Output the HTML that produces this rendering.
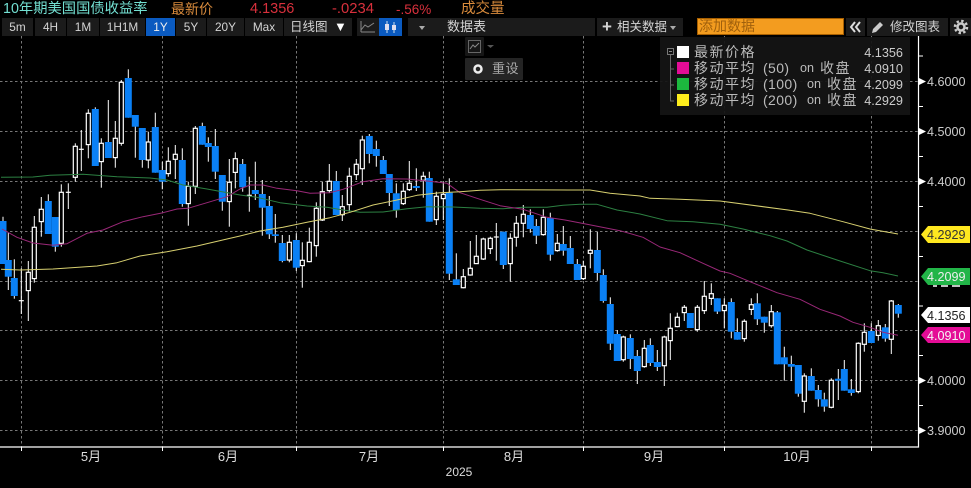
<!DOCTYPE html>
<html><head><meta charset="utf-8">
<style>
html,body{margin:0;padding:0;background:#000;width:971px;height:488px;overflow:hidden}
body{position:relative;font-family:"Liberation Sans","Noto Sans CJK SC",sans-serif;color:#ccc}
.a{position:absolute;white-space:nowrap}
.h{top:1px;font-size:14.3px;line-height:17px}
.b{position:absolute;top:18px;height:18px;background:#1b1b1b;font-size:11.8px;line-height:18px;text-align:center;color:#d4d4d4}
.c{font-size:13px}
.r{position:absolute;font-size:14px;line-height:16px;letter-spacing:1.5px;color:#bbb;white-space:nowrap}
.p{letter-spacing:.4px}
.o{font-size:12.6px;letter-spacing:0}
.v{position:absolute;right:68px;font-size:12.7px;line-height:16px;color:#ccc}
.s{position:absolute;left:677px;width:12px;height:12px}
svg{position:absolute;left:0;top:0}
</style></head><body>
<svg id="c" width="971" height="488" viewBox="0 0 971 488" font-family="Liberation Sans,Noto Sans CJK SC,sans-serif">
<g stroke="#777" stroke-width="1" stroke-dasharray="2.5 2.5" fill="none">
<path d="M21.5 36V447M162.5 36V447M296.5 36V447M443.5 36V447M583.5 36V447M724.5 36V447M871.5 36V447"/>
<path d="M0 81.5H918M0 131.5H918M0 181.5H918M0 231.5H918M0 281.5H918M0 330.5H918M0 380.5H918M0 430.5H918"/>
</g>
<g id="candles"></g>
<g fill="none" stroke-width="1" stroke-linejoin="round">
<path id="g" stroke="#2c8042" d="M1 177.3L33 177 50 175.3 83 174.3 117 176.7 150 178 167 180 183 185 207 189 240 195 257 197.3 280 202.7 307 206 327 207.3 343 210 360 212.3 383 212 407 208.7 427 206.7 453 207 480 208.3 503 208.7 523 207.3 547 207.3 563 205.3 580 204.3 597 204.3 617 210 640 214 667 220.7 693 221.7 720 224.3 743 229 770 235.7 787 241 807 250 837 260 870 270.7 883 272.7 898 276"/>
<path id="m" stroke="#9a2878" d="M2 229L17 237.3 33 243 53 245.3 67 243.7 87 233.3 103 230 123 221.7 143 216.7 163 212.7 177 209 188 208.3 207 202.7 227 196.7 240 189 250 185 263 185 277 188.3 297 190.7 310 193.3 330 192.7 343 189.3 363 181.7 383 178.7 407 179 427 181 447 183.3 460 192.7 480 199.3 500 205.7 523 209.3 547 217.3 565 220 587 224.3 620 230.7 643 237.3 660 247 680 252.7 703 263.3 720 271 730 273.3 750 281.7 777 292.7 800 299.3 820 309.3 840 316 853 322.3 870 327.3 883 332.3 898 335.3"/>
<path id="y" stroke="#d8d070" d="M1 269.3L20 270 53 269 97 266 117 262.7 140 256 167 251.7 197 246 227 239 240 236 260 231 283 227.3 307 222.3 330 217.7 350 212.3 373 205 397 200 417 195.3 440 192.7 460 191.7 480 190.3 500 189.7 570 190 590 190 610 193.3 640 196 650 198.3 680 199.3 720 201 788 210 810 213.3 843 221.7 870 229 898 234"/>
</g>
<g stroke="#fff" fill="none">
<path d="M918.5 36V447H0" stroke-width="1.2"/>
<path d="M21.5 447V451M162.5 447V451M296.5 447V451M443.5 447V451M583.5 447V451M724.5 447V451M871.5 447V451"/>
<path d="M919 56H923M919 106.5H923M919 156.500H923M919 206.500H923M919 256.500H923M919 306H923M919 355.500H923M919 405.500H923"/>
</g>
<g fill="#fff"><path d="M919 78L926 81.500 919 85ZM919 128L926 131.500 919 135ZM919 178L926 181.500 919 185ZM919 377L926 380.500 919 384ZM919 427L926 430.500 919 434Z"/></g>
<g fill="#ccc" font-size="12.600"><text x="927" y="86">4.6000</text><text x="927" y="136">4.5000</text><text x="927" y="186">4.4000</text><text x="927" y="385">4.0000</text><text x="927" y="435">3.9000</text></g>
<g fill="#ddd" font-size="13" text-anchor="middle"><text x="91" y="461">5月</text><text x="228" y="461">6月</text><text x="369" y="461">7月</text><text x="514" y="461">8月</text><text x="654" y="461">9月</text><text x="797" y="461">10月</text><text x="459" y="476" font-size="12">2025</text></g>
<path d="M933 286H937M941 286H948M952 286H960" stroke="#fff" stroke-width="1.500"/>
<path d="M928 226H970V243H928L921 234.500Z" fill="#ffe81f"/>
<path d="M928 268H970V285H928L921 276.500Z" fill="#22b548"/>
<path d="M928 307H970V323H928L921 315Z" fill="#fff"/>
<path d="M928 327H970V343H928L921 335Z" fill="#e40c96"/>
<g font-size="12.600"><text x="927" y="239" fill="#333">4.2929</text><text x="927" y="281" fill="#eee">4.2099</text><text x="927" y="320" fill="#222">4.1356</text><text x="927" y="340" fill="#f4f4f4">4.0910</text></g>
</svg>
<script>
(function(){
var Z=[[0,60,[[9,470,612,483,612,'b'],[25,518,690,600,650,'b'],[43,598,716,654,708,'b'],[64,625,762,722,722,'d'],[85,603,783,637,692,'w'],[103,468,668,502,656,'w'],[124,411,530,448,485,'w'],[145,403,522,423,522,'b'],[166,471,575,471,560,'b'],[184,373,560,397,550,'w'],[205,370,447,397,397,'d'],[226,250,365,259,352,'w'],[244,210,333,268,268,'d'],[265,148,295,160,254,'w'],[286,142,318,147,318,'b'],[304,235,383,250,305,'w'],[325,120,294,246,294,'b'],[346,183,323,235,293,'w'],[364,60,257,67,250,'w'],[385,28,173,54,173,'b'],[406,165,293,165,200,'b'],[427,204,323,204,300,'b'],[445,215,325,246,300,'w'],[466,158,338,201,338,'b'],[487,305,388,330,365,'b'],[505,262,350,304,341,'w'],[526,255,357,283,298,'w'],[547,265,440,300,432,'b'],[565,365,497,379,431,'w'],[586,198,402,205,379,'w'],[607,188,254,198,254,'b'],[625,232,305,249,261,'b'],[646,207,357,258,335,'b'],[667,345,452,345,425,'b'],[688,297,500,367,425,'w'],[706,277,385,296,337,'w']]],
[240,120,[[8,117,215,132,202,'b'],[28,170,275,226,226,'d'],[46,125,240,210,222,'b'],[67,180,347,222,263,'b'],[88,228,357,258,343,'b'],[106,282,368,343,348,'b'],[127,345,427,369,423,'b'],[148,345,427,367,420,'w'],[169,340,453,360,443,'b'],[187,367,503,421,437,'w'],[208,323,427,367,425,'w'],[229,247,410,265,377,'w'],[247,185,303,215,300,'w'],[268,132,218,184,212,'w'],[289,153,285,183,285,'b'],[307,225,303,260,284,'w'],[328,143,275,169,254,'w'],[349,117,180,133,164,'w'],[367,47,195,60,146,'w'],[388,42,130,48,102,'b'],[409,62,140,87,108,'b'],[430,108,162,120,162,'b'],[448,162,258,162,219,'b'],[469,190,293,220,270,'b'],[490,190,255,214,251,'w'],[508,123,213,190,209,'w'],[529,145,213,198,204,'b'],[550,155,233,169,181,'w'],[568,155,305,174,305,'b'],[589,215,315,229,299,'w'],[610,185,300,223,236,'w'],[628,175,480,218,461,'b'],[649,400,495,478,495,'b'],[670,447,505,470,503,'w'],[691,363,467,445,465,'w'],[709,345,431,409,431,'w']]],
[480,190,[[10,143,210,147,207,'w'],[31,140,192,145,176,'w'],[49,99,212,141,141,'d'],[70,125,237,125,225,'b'],[91,130,275,145,221,'w'],[109,78,170,100,142,'w'],[130,45,142,73,100,'w'],[151,58,128,75,117,'b'],[169,87,162,108,137,'b'],[190,58,137,82,134,'w'],[211,68,212,84,194,'b'],[232,132,185,160,182,'w'],[250,108,197,162,182,'b'],[271,138,222,174,222,'b'],[292,207,270,222,270,'b'],[310,212,270,229,266,'w'],[331,118,235,181,190,'w'],[352,125,272,180,249,'b'],[370,238,338,255,333,'b'],[391,322,480,342,461,'b'],[412,420,513,432,513,'b'],[430,437,515,441,509,'w'],[451,433,537,444,507,'b'],[472,480,582,498,543,'b'],[493,450,533,475,530,'w'],[511,445,528,465,519,'b'],[532,480,543,516,531,'b'],[553,437,588,441,527,'w'],[571,370,510,415,452,'w'],[592,368,412,382,410,'w'],[613,345,393,352,368,'w'],[631,369,414,369,414,'b'],[652,345,425,352,419,'w'],[673,273,372,319,362,'w'],[694,280,345,311,325,'w'],[712,325,372,325,365,'b']]],
[720,210,[[13,265,355,286,302,'w'],[34,265,385,276,365,'b'],[52,325,389,366,389,'b'],[73,328,395,334,386,'w'],[94,265,315,284,298,'w'],[112,250,345,280,328,'b'],[133,320,368,320,338,'b'],[154,285,353,305,347,'w'],[172,303,463,307,463,'b'],[193,410,512,442,463,'b'],[214,437,513,462,470,'b'],[235,465,560,465,551,'b'],[253,490,608,498,574,'w'],[274,475,542,498,542,'b'],[295,525,590,540,568,'b'],[313,548,605,568,590,'b'],[334,505,595,511,592,'w'],[355,477,570,506,512,'b'],[373,450,542,477,542,'b'],[394,507,557,538,549,'b'],[415,397,550,400,545,'w'],[433,340,425,367,403,'w'],[454,340,399,363,399,'b'],[475,330,392,347,376,'w'],[496,342,395,352,386,'b'],[514,270,432,273,388,'w'],[535,282,323,285,311,'b']]]];
var h='';
Z.forEach(function(z){var ox=z[0],oy=z[1];z[2].forEach(function(c){
var x=ox+c[0]/3,a=oy+c[1]/3,b=oy+c[2]/3,t=oy+c[3]/3,u=oy+c[4]/3;
h+='<path d="M'+x.toFixed(1)+' '+a.toFixed(1)+'V'+b.toFixed(1)+'" stroke="#fff" stroke-width="1"/>';
if(c[5]=='b')h+='<rect x="'+(x-3.5).toFixed(1)+'" y="'+t.toFixed(1)+'" width="7" height="'+(u-t).toFixed(1)+'" fill="#0a80f5"/>';
else if(c[5]=='w')h+='<rect x="'+(x-2).toFixed(1)+'" y="'+t.toFixed(1)+'" width="4" height="'+(u-t).toFixed(1)+'" fill="#000" stroke="#fff" stroke-width="1.2"/>';
else h+='<path d="M'+(x-2.5).toFixed(1)+' '+t.toFixed(1)+'H'+(x+2.5).toFixed(1)+'" stroke="#fff" stroke-width="1.2"/>';
});});
document.getElementById('candles').innerHTML=h;
})();
</script>

<div class="a h" style="left:3px;color:#73e0d2">10年期美国国债收益率</div>
<div class="a h" style="left:171px;color:#d98b3c;font-size:14px">最新价</div>
<div class="a h" style="left:250px;color:#d8303c;font-size:14.500px">4.1356</div>
<div class="a h" style="left:332px;color:#d8303c;font-size:14.800px">-.0234</div>
<div class="a h" style="left:396px;color:#d8303c;font-size:13.500px">-.56%</div>
<div class="a h" style="left:461px;color:#d98b3c;font-size:14.500px">成交量</div>

<div class="b" style="left:2px;width:31px">5m</div>
<div class="b" style="left:35px;width:31px">4H</div>
<div class="b" style="left:67px;width:32px">1M</div>
<div class="b" style="left:100px;width:45px">1H1M</div>
<div class="b" style="left:146px;width:29px;background:#0a5ac0;color:#eee">1Y</div>
<div class="b" style="left:176px;width:30px">5Y</div>
<div class="b" style="left:207px;width:37px">20Y</div>
<div class="b" style="left:245px;width:38px">Max</div>
<div class="b" style="left:284px;width:68px;font-size:12.500px;text-align:left"><span style="position:absolute;left:6px;top:0">日线图</span><span style="position:absolute;left:50px;top:0;font-size:13px;color:#fff">▼</span></div>
<div class="b" style="left:357px;width:22px"><svg width="22" height="18"><path d="M4 14H18M4 3V14M4 12L8 7 11 9 17 5" stroke="#888" fill="none"/></svg></div>
<div class="b" style="left:379px;width:23px;background:#0a5ac0"><svg width="23" height="18"><path d="M8 3V15M15 4V15" stroke="#cde"/><rect x="6" y="6" width="4" height="6" fill="#dde"/><rect x="13" y="7" width="4" height="5" fill="#dde"/></svg></div>
<div class="b" style="left:408px;width:28px"><svg width="28" height="18"><path d="M11 8H17L14 12Z" fill="#aaa"/></svg></div>
<div class="b" style="left:436px;width:159px;text-align:left;text-indent:11px;font-size:13px">数据表</div>
<div class="b" style="left:597px;width:86px;text-align:left;font-size:12.500px"><span style="position:absolute;left:5px;top:0;font-size:17px;font-weight:bold">+</span><span style="position:absolute;left:20px;top:0">相关数据</span><svg width="86" height="18"><path d="M73 8H79L76 12Z" fill="#aaa"/></svg></div>
<div class="a" style="left:697px;top:18px;width:147px;height:17px;background:#f39c1f;border:1px solid #a85f00;box-sizing:border-box;color:#a0600c;font-size:14px;line-height:15px;padding-left:1px">添加数据</div>
<div class="b" style="left:846px;width:19px"><svg width="19" height="18"><path d="M9 4L5 9 9 14M14 4L10 9 14 14" stroke="#ddd" stroke-width="2" fill="none"/></svg></div>
<div class="b" style="left:867px;width:81px;font-size:12.500px;text-align:left"><svg width="20" height="18"><path d="M5 15L6 11 13 4 16 7 9 14Z" fill="#ccc"/></svg><span style="position:absolute;left:23px;top:0">修改图表</span></div>
<div class="b" style="left:950px;width:21px"><svg width="21" height="18"><circle cx="11" cy="9" r="3.500" fill="none" stroke="#ccc" stroke-width="2.500"/><circle cx="11" cy="9" r="6" fill="none" stroke="#ccc" stroke-width="2.500" stroke-dasharray="2.400 2.312"/></svg></div>

<div class="a" style="left:465px;top:37px;width:19px;height:19px;background:#161616;border-radius:1px"></div>
<svg style="left:465px;top:37px" width="36" height="20"><rect x="3.500" y="3.500" width="12" height="12" fill="none" stroke="#666"/><path d="M5 12L8 8 10 10 14 6" stroke="#888" fill="none"/><path d="M22 8H29L25.500 11Z" fill="#555"/></svg>
<div class="a" style="left:465px;top:58px;width:58px;height:22px;background:#242424;border-radius:1px"></div>
<svg style="left:465px;top:58px" width="24" height="22"><circle cx="13" cy="11" r="3.500" fill="none" stroke="#eee" stroke-width="2.500"/></svg>
<div class="a" style="left:492px;top:60px;font-size:13px;line-height:18px;color:#aaa;letter-spacing:.5px">重设</div>

<div class="a" style="left:660px;top:37px;width:250px;height:78px;background:rgba(20,20,20,.93)"></div>
<svg width="971" height="488"><path d="M670.500 52V101H674M670.500 69H674M670.500 85H674" stroke="#666" fill="none"/><rect x="667.500" y="48.500" width="6" height="6" fill="#111" stroke="#777"/><path d="M669 51.500H672" stroke="#888"/></svg>
<div class="s" style="top:46px;background:#fff"></div>
<div class="s" style="top:62px;background:#e40c96"></div>
<div class="s" style="top:78px;background:#1cb83e"></div>
<div class="s" style="top:94px;background:#fdec1c"></div>
<div class="r" style="left:694px;top:44px">最新价格</div>
<div class="r" style="left:694px;top:60px">移动平均</div>
<div class="r p" style="left:763px;top:60px">(50)</div>
<div class="r o" style="left:800px;top:60px">on</div>
<div class="r" style="left:820px;top:60px">收盘</div>
<div class="r" style="left:694px;top:76px">移动平均</div>
<div class="r p" style="left:763px;top:76px">(100)</div>
<div class="r o" style="left:807px;top:76px">on</div>
<div class="r" style="left:827px;top:76px">收盘</div>
<div class="r" style="left:694px;top:92px">移动平均</div>
<div class="r p" style="left:763px;top:92px">(200)</div>
<div class="r o" style="left:807px;top:92px">on</div>
<div class="r" style="left:827px;top:92px">收盘</div>
<div class="v" style="top:45px">4.1356</div>
<div class="v" style="top:61px">4.0910</div>
<div class="v" style="top:77px">4.2099</div>
<div class="v" style="top:93px">4.2929</div>
</body></html>
